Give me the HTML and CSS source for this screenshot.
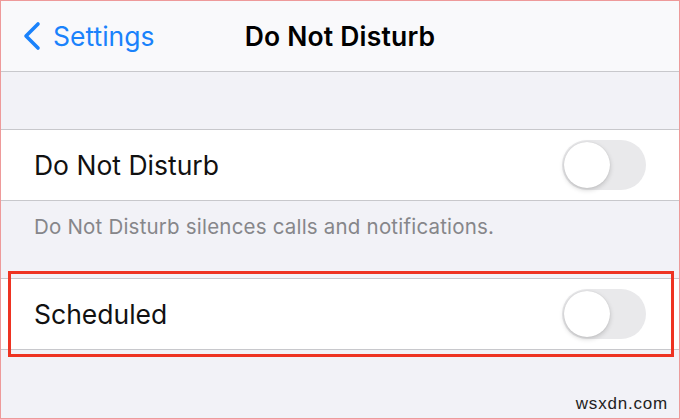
FILE: index.html
```html
<!DOCTYPE html>
<html lang="en">

<head>
    <meta charset="UTF-8">
    <title>Do Not Disturb</title>
    <link rel="stylesheet" href="styles.css">
</head>

<body>
    <div class="screen">
        <header class="nav">
            <a class="back" href="#">
                <svg class="chevron" width="20" height="30" viewBox="0 0 20 30">
                    <path d="M16 3 L4 15 L16 27" fill="none" stroke="#1a82fb" stroke-width="3.6" stroke-linecap="round" stroke-linejoin="round"/>
                </svg>
                <span>Settings</span>
            </a>
            <h1 class="title">Do Not Disturb</h1>
            <span></span>
        </header>

        <div class="spacer"></div>

        <section class="group">
            <div class="row">
                <span class="label">Do Not Disturb</span>
                <span class="switch"><span class="knob"></span></span>
            </div>
        </section>
        <p class="note">Do Not Disturb silences calls and notifications.</p>

        <section class="group marked">
            <div class="row">
                <span class="label">Scheduled</span>
                <span class="switch"><span class="knob"></span></span>
            </div>
        </section>

        <span class="watermark">wsxdn.com</span>
    </div>
</body>

</html>
```

FILE: styles.css
```css
* {
    margin: 0;
    padding: 0;
    box-sizing: border-box;
}

body {
    width: 680px;
    height: 419px;
    font-family: Inter, "Liberation Sans", sans-serif;
    background: #f2f2f7;
    overflow: hidden;
}

.screen {
    position: relative;
    width: 680px;
    height: 419px;
    border: 1px solid #ee9a9a;
    background: #f2f2f7;
}

.nav {
    height: 71px;
    background: #f9f9fb;
    border-bottom: 1px solid #c8c8cc;
    display: grid;
    grid-template-columns: 1fr auto 1fr;
    align-items: center;
    padding: 0 21px;
}

.back {
    display: flex;
    align-items: center;
    gap: 11px;
    color: #1a82fb;
    text-decoration: none;
    font-size: 26.5px;
}

.chevron {
    display: block;
}

.title {
    font-size: 26.5px;
    font-weight: 600;
    color: #000;
    letter-spacing: 0.2px;
}

.spacer {
    height: 57px;
}

.group {
    position: relative;
    background: #fff;
    border-top: 1px solid #c8c8cc;
    border-bottom: 1px solid #c8c8cc;
}

.row {
    height: 70px;
    display: flex;
    align-items: center;
    justify-content: space-between;
    padding: 0 33px;
}

.label {
    font-size: 26.5px;
    color: #111;
}

.switch {
    width: 84px;
    height: 50px;
    border-radius: 25px;
    background: #e9e9eb;
    padding: 2px;
    display: flex;
    align-items: center;
}

.knob {
    width: 46px;
    height: 46px;
    border-radius: 50%;
    background: #fff;
    box-shadow: 0 2px 5px rgba(0, 0, 0, 0.18), 0 0 1px rgba(0, 0, 0, 0.15);
}

.note {
    height: 77px;
    padding: 13px 0 0 33px;
    font-size: 20.5px;
    color: #86868a;
    letter-spacing: 0.2px;
}

/* red annotation frame drawn over the second row */
.marked::after {
    content: "";
    position: absolute;
    left: 7px;
    right: 5px;
    top: -8px;
    bottom: -8px;
    border: 3px solid #ee3322;
}

.watermark {
    position: absolute;
    right: 11px;
    bottom: 4px;
    font-family: "Liberation Sans", sans-serif;
    font-size: 17px;
    letter-spacing: 0.8px;
    color: #222;
}
```
